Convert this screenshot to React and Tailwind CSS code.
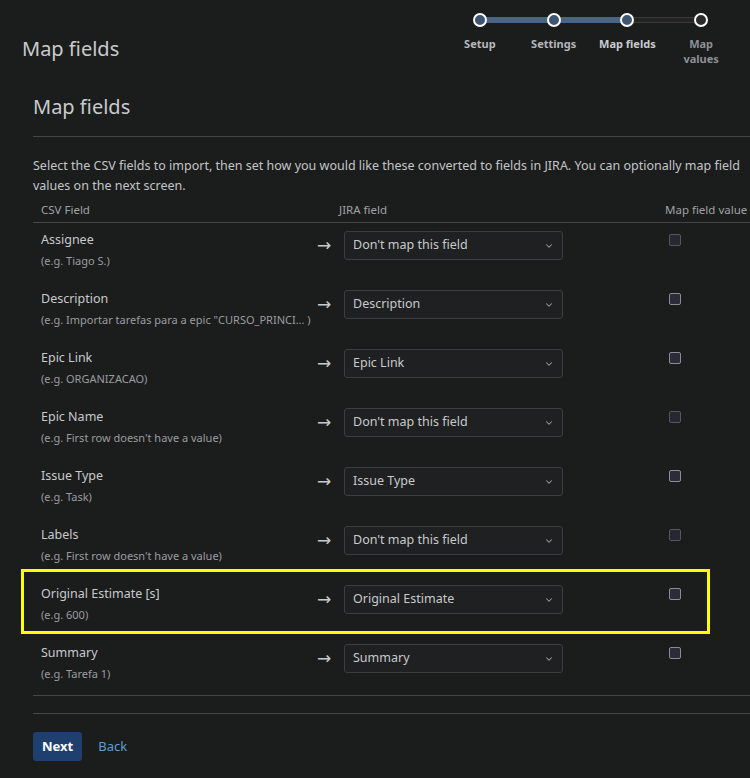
import { ChevronDown } from 'lucide-react'

const ROWS = [
  { name: 'Assignee', example: '(e.g. Tiago S.)', value: "Don't map this field", disabled: true },
  { name: 'Description', example: '(e.g. Importar tarefas para a epic "CURSO_PRINCI... )', value: 'Description' },
  { name: 'Epic Link', example: '(e.g. ORGANIZACAO)', value: 'Epic Link' },
  { name: 'Epic Name', example: "(e.g. First row doesn't have a value)", value: "Don't map this field", disabled: true },
  { name: 'Issue Type', example: '(e.g. Task)', value: 'Issue Type' },
  { name: 'Labels', example: "(e.g. First row doesn't have a value)", value: "Don't map this field", disabled: true },
  { name: 'Original Estimate [s]', example: '(e.g. 600)', value: 'Original Estimate', highlight: true },
  { name: 'Summary', example: '(e.g. Tarefa 1)', value: 'Summary' },
]

const STEPS = [
  { label: 'Setup', state: 'done' },
  { label: 'Settings', state: 'done' },
  { label: 'Map fields', state: 'current' },
  { label: 'Map values', state: 'todo' },
]

export default function App() {
  return (
    <div
      className="relative w-[750px] h-[778px] overflow-hidden bg-[#1b1c1c] text-[#c8cacc]"
      style={{ fontFamily: '"Noto Sans", "Open Sans", sans-serif' }}
    >
      {/* ─── HEADER ─── */}
      <div className="flex items-start justify-between h-[88px]">
        <h1 className="pl-[22px] pt-[35px] text-[20px] leading-[28px] text-[#c9cbce]">Map fields</h1>
        <Stepper />
      </div>

      {/* ─── CONTENT ─── */}
      <div className="pl-[33px]">
        <h2 className="text-[20px] leading-[28px] text-[#c9cbce] pt-[5px]">Map fields</h2>
        <div className="h-px bg-[#444546] mt-[15px]" />
        <p className="text-[12.5px] leading-[20px] mt-[19px] text-[#c3c5c8]">
          Select the CSV fields to import, then set how you would like these converted to fields in JIRA. You can optionally map field values on the next screen.
        </p>

        {/* table */}
        <div className="mt-[6px]">
          <div className="grid grid-cols-[277px_26px_321px_1fr] text-[11.5px] leading-[16px] text-[#9fa2a5] pb-[4px] border-b border-[#444546]">
            <div className="pl-2">CSV Field</div>
            <div />
            <div className="pl-[3px]">JIRA field</div>
            <div className="pl-2 whitespace-nowrap">Map field value</div>
          </div>
          {ROWS.map((r) => (
            <Row key={r.name} row={r} />
          ))}
          <div className="h-px bg-[#444546]" />
        </div>

        <div className="h-px bg-[#444546] mt-[17px]" />

        <div className="flex items-center gap-[16px] mt-[18px]">
          <button className="h-[29px] px-[9px] rounded-[3px] bg-[#1f3f6e] text-white font-bold text-[13px]">Next</button>
          <a className="text-[13px] text-[#5a9fd6]">Back</a>
        </div>
      </div>
    </div>
  )
}

function Stepper() {
  return (
    <div className="relative w-[307px] pt-[13px] pr-[12px]">
      {/* track */}
      <div className="absolute left-[37px] top-[17px] w-[221px] h-[6px] border border-[#3a3a3a] bg-[#232323]" />
      <div className="absolute left-[37px] top-[17px] w-[147px] h-[6px] bg-[#4a6584]" />
      <div className="relative grid grid-cols-4">
        {STEPS.map((s) => (
          <div key={s.label} className="flex flex-col items-center">
            <span
              className={`w-[14px] h-[14px] rounded-full border-[2.5px] border-white ${
                s.state === 'todo' ? 'bg-[#2b2b2b]' : 'bg-[#3d5672]'
              }`}
            />
            <span
              className={`mt-[9px] text-[11px] leading-[15px] font-bold text-center w-[60px] ${
                s.state === 'current' ? 'text-[#c9cbce]' : s.state === 'todo' ? 'text-[#8d9094]' : 'text-[#b5b8bb]'
              }`}
            >
              {s.label}
            </span>
          </div>
        ))}
      </div>
    </div>
  )
}

function Row({ row }) {
  return (
    <div className="relative grid grid-cols-[277px_26px_321px_1fr] h-[59px] pt-[8px]">
      {row.highlight && (
        <div className="absolute left-[-12px] top-[-8px] w-[689px] h-[65px] border-[3px] border-[#ffff00]" />
      )}
      <div className="pl-2">
        <div className="text-[12.5px] leading-[18px] text-[#c8cacc]">{row.name}</div>
        <div className="text-[11px] leading-[16px] mt-[4px] text-[#9a9da0] whitespace-nowrap">{row.example}</div>
      </div>
      <div className="text-[17px] leading-[28px] text-[#c8cacc] pl-[7px]" style={{ fontFamily: '"DejaVu Sans", sans-serif' }}>
        →
      </div>
      <div className="pl-[8px]">
        <div className="flex items-center justify-between w-[219px] h-[29px] border border-[#3c3d3e] rounded-[3px] bg-[#1f2021] pl-[8px] pr-[8px]">
          <span className="text-[12.5px] text-[#c8cacc]">{row.value}</span>
          <ChevronDown size={10} strokeWidth={2.5} className="text-[#9a9da0]" />
        </div>
      </div>
      <div className="pl-3 pt-[3px]">
        <span
          className={`block w-[12px] h-[12px] rounded-[2px] border ${
            row.disabled ? 'border-[#55575c] bg-[#262730]' : 'border-[#8a8d95] bg-[#2b2c38]'
          }`}
        />
      </div>
    </div>
  )
}
